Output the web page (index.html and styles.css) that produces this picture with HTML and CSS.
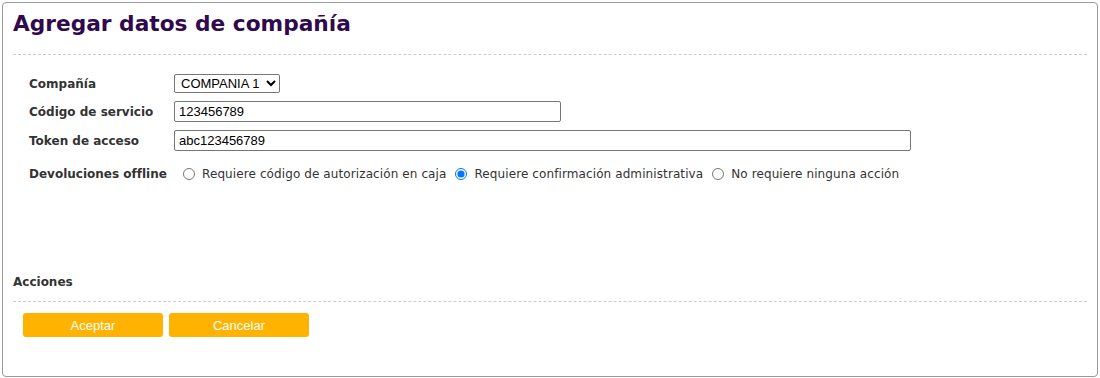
FILE: index.html
```html
<!doctype html>
<html lang="es">
	<head>
		<meta charset="UTF-8">
		<title>Agregar datos de compañía</title>
		<link rel="stylesheet" href="styles.css">
	</head>
	<body>
		<div class="panel">
			<h1 class="titulo">Agregar datos de compañía</h1>
			<div class="form">
				<label class="etiqueta">Compañía</label>
				<div class="campo">
					<select class="sel">
						<option>COMPANIA 1</option>
					</select>
				</div>
				<label class="etiqueta">Código de servicio</label>
				<div class="campo">
					<input type="text" class="txt corto" value="123456789">
				</div>
				<label class="etiqueta">Token de acceso</label>
				<div class="campo">
					<input type="text" class="txt largo" value="abc123456789">
				</div>
				<label class="etiqueta ultima">Devoluciones offline</label>
				<div class="campo radios ultima">
					<label class="opcion"><input type="radio" name="dev"> Requiere código de autorización en caja</label>
					<label class="opcion"><input type="radio" name="dev" checked> Requiere confirmación administrativa</label>
					<label class="opcion"><input type="radio" name="dev"> No requiere ninguna acción</label>
				</div>
			</div>
			<div class="acciones">
				<h2 class="subtitulo">Acciones</h2>
				<div class="botones">
					<button class="btn">Aceptar</button>
					<button class="btn">Cancelar</button>
				</div>
			</div>
		</div>
	</body>
</html>
```

FILE: styles.css
```css
html,body,div,h1,h2,label,input,select {
	margin: 0;
	padding: 0;
	box-sizing: border-box;
}
body {
	background: #fff;
	padding: 2px;
	font-family: "DejaVu Sans", Verdana, sans-serif;
	color: #333;
}
.panel {
	width: 1096px;
	height: 375px;
	border: 1px solid #999;
	border-radius: 4px;
	padding: 0 10px;
	display: flex;
	flex-direction: column;
}
.titulo {
	font-size: 21.7px;
	font-weight: bold;
	color: #300a4c;
	padding: 8px 0 18px;
	border-bottom: 1px dashed #ccc;
}
.form {
	display: grid;
	grid-template-columns: 145px 1fr;
	row-gap: 8px;
	padding: 19px 16px 0;
	align-items: center;
}
.ultima {
	margin-top: 8px;
}
.etiqueta {
	font-size: 12px;
	font-weight: bold;
	color: #333;
}
.campo {
	display: flex;
	align-items: center;
}
.sel {
	font-family: "Liberation Sans", Arial, sans-serif;
	font-size: 13px;
	width: 106px;
	height: 19px;
	border: 1px solid #767676;
	border-radius: 2px;
	color: #000;
	background: #fff;
	padding: 0 0 0 2px;
}
.txt {
	font-family: "Liberation Sans", Arial, sans-serif;
	font-size: 13px;
	height: 21px;
	border: 1px solid #767676;
	border-radius: 2px;
	padding: 1px 4px;
	color: #000;
}
.corto {
	width: 387px;
}
.largo {
	width: 737px;
}
.radios {
	padding-left: 5px;
	gap: 5px;
}
.opcion {
	font-size: 12px;
	letter-spacing: 0.1px;
	color: #333;
	display: flex;
	align-items: center;
}
.opcion input {
	margin: 0 7px 0 4px;
	width: 12px;
	height: 12px;
}
.acciones {
	margin-top: auto;
	padding-bottom: 39px;
}
.subtitulo {
	font-size: 12px;
	font-weight: bold;
	color: #333;
	padding-bottom: 12px;
	border-bottom: 1px dashed #ccc;
}
.botones {
	display: flex;
	gap: 6px;
	padding: 11px 10px 0;
}
.btn {
	width: 140px;
	height: 24px;
	background: #ffb300;
	border: none;
	border-radius: 3px;
	color: #fff;
	font-family: "Liberation Sans", Arial, sans-serif;
	font-size: 13px;
	cursor: pointer;
}
```
